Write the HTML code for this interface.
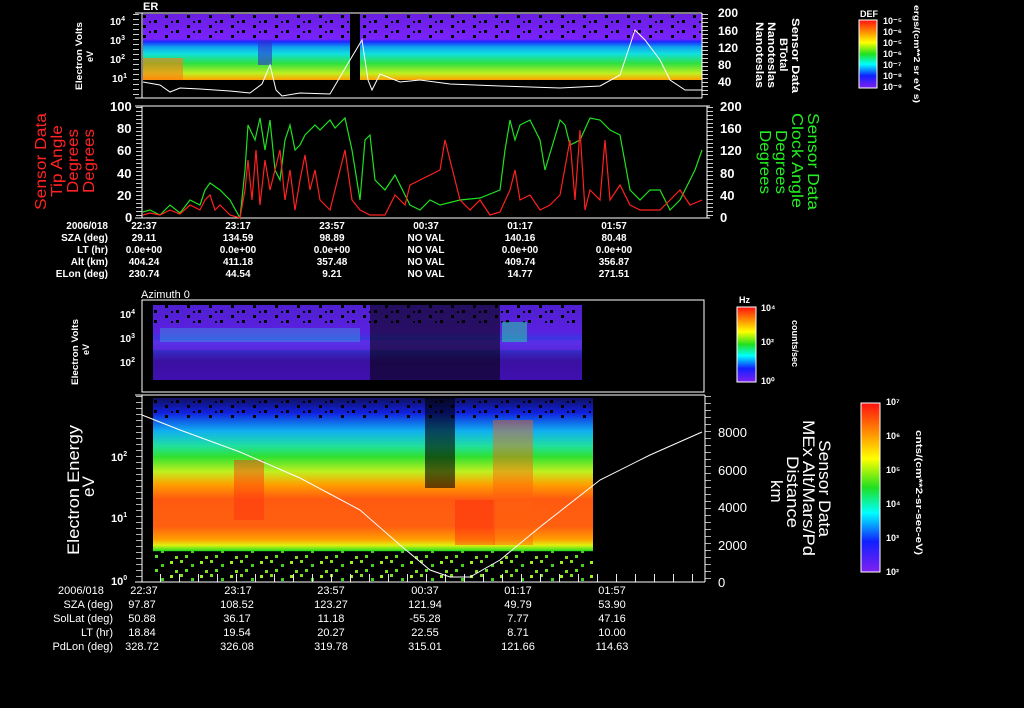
<!DOCTYPE html>
<html><head><meta charset="utf-8"><style>
html,body{margin:0;padding:0;background:#000;width:1024px;height:708px;overflow:hidden}
svg{display:block;font-size:11px}
text{font-family:"Liberation Sans",sans-serif;fill:#fff}
.s{font-weight:bold}
</style></head><body>
<svg width="1024" height="708" viewBox="0 0 1024 708" xmlns="http://www.w3.org/2000/svg">
<defs>
<linearGradient id="sp1" x1="0" y1="0" x2="0" y2="1">
<stop offset="0" stop-color="#6a1fe0"/><stop offset="0.38" stop-color="#7a22ff"/><stop offset="0.42" stop-color="#1a2aff"/><stop offset="0.5" stop-color="#10a0f0"/><stop offset="0.6" stop-color="#10e0e0"/><stop offset="0.75" stop-color="#30e040"/><stop offset="0.9" stop-color="#c0f020"/><stop offset="1" stop-color="#ffa000"/></linearGradient>
<linearGradient id="sp4" x1="0" y1="0" x2="0" y2="1">
<stop offset="0" stop-color="#101060"/><stop offset="0.08" stop-color="#1020e0"/><stop offset="0.18" stop-color="#10b0f0"/><stop offset="0.26" stop-color="#20e0a0"/><stop offset="0.32" stop-color="#30e030"/><stop offset="0.4" stop-color="#c0f020"/><stop offset="0.47" stop-color="#ffa000"/><stop offset="0.55" stop-color="#ff5a10"/><stop offset="0.7" stop-color="#ff6010"/><stop offset="0.77" stop-color="#ffa000"/><stop offset="0.8" stop-color="#e0f010"/><stop offset="0.83" stop-color="#30e020"/><stop offset="0.835" stop-color="#000"/><stop offset="1" stop-color="#000"/></linearGradient>
<linearGradient id="sp3" x1="0" y1="0" x2="0" y2="1">
<stop offset="0" stop-color="#5020d0"/><stop offset="0.35" stop-color="#5a20e0"/><stop offset="0.5" stop-color="#3040e0"/><stop offset="0.75" stop-color="#3a10a0"/><stop offset="1" stop-color="#4010b0"/></linearGradient>
<linearGradient id="cb" x1="0" y1="0" x2="0" y2="1">
<stop offset="0" stop-color="#ff1010"/><stop offset="0.2" stop-color="#ffa000"/><stop offset="0.33" stop-color="#ffff00"/><stop offset="0.5" stop-color="#20e020"/><stop offset="0.65" stop-color="#00ffff"/><stop offset="0.82" stop-color="#1020ff"/><stop offset="1" stop-color="#8020f0"/></linearGradient>
<pattern id="dots" width="30" height="14" patternUnits="userSpaceOnUse">
<rect x="0" y="0" width="3" height="3" fill="#80e020"/><rect x="11" y="4" width="3" height="3" fill="#40d020"/><rect x="20" y="1" width="3" height="3" fill="#a0f020"/><rect x="5" y="9" width="3" height="3" fill="#60e020"/><rect x="25" y="10" width="3" height="3" fill="#80e020"/></pattern>
<pattern id="spk" width="22" height="10" patternUnits="userSpaceOnUse">
<rect x="0" y="0" width="3" height="3" fill="#000"/><rect x="11" y="5" width="3" height="3" fill="#000"/><rect x="17" y="1" width="2" height="2" fill="#000"/></pattern>
</defs>

<!-- Panel 1 -->
<rect x="143" y="14" width="207" height="66" fill="url(#sp1)"/>
<rect x="360" y="14" width="342" height="66" fill="url(#sp1)"/>
<rect x="143" y="14" width="207" height="26" fill="url(#spk)"/>
<rect x="360" y="14" width="342" height="26" fill="url(#spk)"/>
<rect x="143" y="58" width="40" height="22" fill="#ff7a10" opacity="0.6"/>
<rect x="258" y="40" width="14" height="25" fill="#3030d0" opacity="0.6"/>
<polyline points="143,82 160,85 170,92 180,88 200,89 230,91 250,93 262,84 270,65 276,90 282,96 300,93 330,94 350,60 362,40 368,80 372,90 380,74 400,82 420,80 450,84 500,86 560,88 600,86 620,75 635,30 645,40 660,60 670,80 685,90 702,90" fill="none" stroke="#fff" stroke-width="1"/>
<g stroke="#fff" fill="none">
<line x1="135" y1="13" x2="702" y2="13"/><line x1="135" y1="98" x2="702" y2="98"/>
<line x1="142" y1="13" x2="142" y2="98"/><line x1="702" y1="13" x2="702" y2="98"/>
<line x1="136" y1="14" x2="136" y2="98" stroke-width="6" stroke-dasharray="1,4" opacity="0.8"/>
<line x1="705" y1="14" x2="705" y2="98" stroke-width="6" stroke-dasharray="1,3" opacity="0.8"/>
</g>
<text x="143" y="10" class="s">ER</text>
<g class="s" font-size="10">
<text x="110" y="25">10<tspan dy="-4" font-size="7">4</tspan></text>
<text x="110" y="44">10<tspan dy="-4" font-size="7">3</tspan></text>
<text x="110" y="63">10<tspan dy="-4" font-size="7">2</tspan></text>
<text x="112" y="82">10<tspan dy="-4" font-size="7">1</tspan></text>
</g>
<text transform="translate(82,90) rotate(-90)" class="s" font-size="9" textLength="68" lengthAdjust="spacingAndGlyphs">Electron Volts</text>
<text transform="translate(93,62) rotate(-90)" class="s" font-size="9">eV</text>
<g class="s" font-size="12"><text x="718" y="17">200</text><text x="718" y="35">160</text><text x="718" y="52">120</text><text x="718" y="69">80</text><text x="718" y="86">40</text></g>
<text transform="translate(792,18) rotate(90)" class="s" font-size="11" textLength="75" lengthAdjust="spacingAndGlyphs">Sensor Data</text>
<text transform="translate(780,38) rotate(90)" class="s" font-size="11">BTotal</text>
<text transform="translate(768,22) rotate(90)" class="s" font-size="11" textLength="66" lengthAdjust="spacingAndGlyphs">Nanoteslas</text>
<text transform="translate(756,22) rotate(90)" class="s" font-size="11" textLength="66" lengthAdjust="spacingAndGlyphs">Nanoteslas</text>
<text x="860" y="17" class="s" font-size="9">DEF</text>
<rect x="859" y="20" width="18" height="68" fill="url(#cb)" stroke="#fff"/>
<g font-size="9" class="s"><text x="883" y="24">10⁻⁵</text><text x="883" y="35">10⁻⁶</text><text x="883" y="46">10⁻⁵</text><text x="883" y="57">10⁻⁶</text><text x="883" y="68">10⁻⁷</text><text x="883" y="79">10⁻⁸</text><text x="883" y="90">10⁻⁹</text></g>
<text transform="translate(914,5) rotate(90)" class="s" font-size="8" textLength="98" lengthAdjust="spacingAndGlyphs">ergs/(cm**2 sr eV s)</text>

<!-- Panel 2 -->
<g stroke="#fff" fill="none">
<line x1="135" y1="106" x2="710" y2="106"/><line x1="135" y1="218" x2="710" y2="218"/>
<line x1="142" y1="106" x2="142" y2="218"/><line x1="707" y1="106" x2="707" y2="218"/>
<line x1="139" y1="107" x2="139" y2="218" stroke-width="6" stroke-dasharray="1,3" opacity="0.8"/>
<line x1="710" y1="107" x2="710" y2="218" stroke-width="6" stroke-dasharray="1,3" opacity="0.8"/>
</g>
<polyline points="143,212 150,210 160,215 170,205 180,213 190,200 200,205 205,190 210,183 220,190 230,200 240,218 245,170 248,125 255,140 260,118 265,150 270,120 275,170 280,180 285,140 290,125 295,150 300,145 305,135 315,125 320,130 330,120 335,128 345,118 352,150 360,200 365,140 370,135 375,180 385,190 395,175 400,185 410,205 420,210 430,200 440,205 460,200 480,198 500,190 505,150 510,120 515,140 520,125 530,120 540,140 545,170 560,120 565,125 570,145 580,140 590,118 600,120 610,130 620,135 630,190 640,200 650,190 660,190 670,210 680,200 690,180 695,170 702,150" fill="none" stroke="#20e020" stroke-width="1.2"/>
<polyline points="143,215 150,213 160,215 170,210 180,214 190,205 200,210 205,200 210,195 215,210 220,205 230,215 240,218 245,190 248,160 252,200 256,150 260,205 265,160 270,190 280,150 285,200 290,170 295,210 300,180 305,155 310,190 315,170 320,200 330,210 345,150 352,200 360,210 370,215 385,215 395,195 405,205 410,185 420,180 430,175 440,170 445,140 450,160 460,200 470,210 480,200 490,215 500,212 510,190 515,170 520,200 530,195 540,210 550,205 560,195 570,140 575,200 580,130 585,210 590,190 600,200 605,140 610,200 620,185 630,205 640,210 660,210 670,200 680,190 690,205 702,200" fill="none" stroke="#ff2020" stroke-width="1.2"/>
<g font-size="13" class="s"><text x="110" y="111">100</text><text x="117" y="133">80</text><text x="117" y="155">60</text><text x="117" y="178">40</text><text x="117" y="200">20</text><text x="125" y="222">0</text>
<text x="720" y="111">200</text><text x="720" y="133">160</text><text x="720" y="155">120</text><text x="720" y="178">80</text><text x="720" y="200">40</text><text x="720" y="222">0</text></g>
<g font-size="16"><text transform="translate(46,210) rotate(-90)" style="fill:#f22" textLength="97" lengthAdjust="spacingAndGlyphs">Sensor Data</text><text transform="translate(62,197) rotate(-90)" style="fill:#f22" textLength="72" lengthAdjust="spacingAndGlyphs">Tip Angle</text><text transform="translate(78,193) rotate(-90)" style="fill:#f22" textLength="64" lengthAdjust="spacingAndGlyphs">Degrees</text><text transform="translate(94,193) rotate(-90)" style="fill:#f22" textLength="64" lengthAdjust="spacingAndGlyphs">Degrees</text></g>
<g font-size="16"><text transform="translate(808,113) rotate(90)" style="fill:#2e2" textLength="97" lengthAdjust="spacingAndGlyphs">Sensor Data</text><text transform="translate(792,113) rotate(90)" style="fill:#2e2" textLength="95" lengthAdjust="spacingAndGlyphs">Clock Angle</text><text transform="translate(776,130) rotate(90)" style="fill:#2e2" textLength="64" lengthAdjust="spacingAndGlyphs">Degrees</text><text transform="translate(760,130) rotate(90)" style="fill:#2e2" textLength="64" lengthAdjust="spacingAndGlyphs">Degrees</text></g>

<g class="s" font-size="10" text-anchor="middle">
<text x="108" y="229" text-anchor="end">2006/018</text><text x="144" y="229">22:37</text><text x="238" y="229">23:17</text><text x="332" y="229">23:57</text><text x="426" y="229">00:37</text><text x="520" y="229">01:17</text><text x="614" y="229">01:57</text>
<text x="108" y="241" text-anchor="end">SZA (deg)</text><text x="144" y="241">29.11</text><text x="238" y="241">134.59</text><text x="332" y="241">98.89</text><text x="426" y="241">NO VAL</text><text x="520" y="241">140.16</text><text x="614" y="241">80.48</text>
<text x="108" y="253" text-anchor="end">LT (hr)</text><text x="144" y="253">0.0e+00</text><text x="238" y="253">0.0e+00</text><text x="332" y="253">0.0e+00</text><text x="426" y="253">NO VAL</text><text x="520" y="253">0.0e+00</text><text x="614" y="253">0.0e+00</text>
<text x="108" y="265" text-anchor="end">Alt (km)</text><text x="144" y="265">404.24</text><text x="238" y="265">411.18</text><text x="332" y="265">357.48</text><text x="426" y="265">NO VAL</text><text x="520" y="265">409.74</text><text x="614" y="265">356.87</text>
<text x="108" y="277" text-anchor="end">ELon (deg)</text><text x="144" y="277">230.74</text><text x="238" y="277">44.54</text><text x="332" y="277">9.21</text><text x="426" y="277">NO VAL</text><text x="520" y="277">14.77</text><text x="614" y="277">271.51</text>
</g>

<!-- Panel 3 -->
<text x="141" y="298" font-size="11">Azimuth 0</text>
<rect x="153" y="305" width="429" height="75" fill="url(#sp3)"/>
<rect x="153" y="305" width="429" height="20" fill="url(#spk)"/>
<rect x="153" y="340" width="429" height="10" fill="#8020f0" opacity="0.5"/>
<rect x="160" y="328" width="200" height="14" fill="#30c0e0" opacity="0.35"/>
<rect x="502" y="322" width="25" height="20" fill="#20e0a0" opacity="0.5"/>
<rect x="370" y="305" width="130" height="75" fill="#000" opacity="0.55"/>
<g stroke="#fff" fill="none"><rect x="142" y="300" width="562" height="92"/></g>
<g class="s" font-size="10"><text x="120" y="318">10<tspan dy="-4" font-size="7">4</tspan></text><text x="120" y="342">10<tspan dy="-4" font-size="7">3</tspan></text><text x="120" y="366">10<tspan dy="-4" font-size="7">2</tspan></text></g>
<text transform="translate(78,385) rotate(-90)" class="s" font-size="9" textLength="66" lengthAdjust="spacingAndGlyphs">Electron Volts</text>
<text transform="translate(89,355) rotate(-90)" class="s" font-size="9">eV</text>
<text x="739" y="303" class="s" font-size="9">Hz</text>
<rect x="737" y="307" width="19" height="75" fill="url(#cb)" stroke="#fff"/>
<g font-size="9" class="s"><text x="761" y="311">10⁴</text><text x="761" y="345">10²</text><text x="761" y="384">10⁰</text></g>
<text transform="translate(792,320) rotate(90)" class="s" font-size="9">counts/sec</text>

<!-- Panel 4 -->
<rect x="153" y="398" width="440" height="184" fill="url(#sp4)"/>
<rect x="153" y="551" width="440" height="31" fill="url(#dots)"/>
<rect x="153" y="398" width="440" height="20" fill="url(#spk)"/>
<rect x="234" y="460" width="30" height="60" fill="#ff3010" opacity="0.45"/>
<rect x="425" y="398" width="30" height="90" fill="#000" opacity="0.6"/>
<rect x="455" y="500" width="40" height="45" fill="#ff2010" opacity="0.4"/>
<rect x="493" y="420" width="40" height="125" fill="#ff6010" opacity="0.45"/>
<polyline points="142,415 180,430 240,452 300,478 360,510 400,545 430,570 450,577 470,577 500,560 540,527 600,480 650,455 702,432" fill="none" stroke="#fff" stroke-width="1"/>
<g stroke="#fff" fill="none"><line x1="135" y1="395" x2="705" y2="395"/><line x1="135" y1="582" x2="705" y2="582"/><line x1="142" y1="395" x2="142" y2="582"/><line x1="705" y1="395" x2="705" y2="582"/>
<line x1="139" y1="396" x2="139" y2="582" stroke-width="6" stroke-dasharray="1,5" opacity="0.7"/>
<line x1="708" y1="396" x2="708" y2="582" stroke-width="6" stroke-dasharray="1,6" opacity="0.7"/>
<line x1="160" y1="578" x2="700" y2="578" stroke-width="8" stroke-dasharray="1,18" opacity="0.9"/>
</g>
<g class="s" font-size="11"><text x="111" y="461">10<tspan dy="-5" font-size="7">2</tspan></text><text x="111" y="522">10<tspan dy="-5" font-size="7">1</tspan></text><text x="111" y="585">10<tspan dy="-5" font-size="7">0</tspan></text></g>
<text transform="translate(79,555) rotate(-90)" font-size="17" textLength="130" lengthAdjust="spacingAndGlyphs">Electron Energy</text>
<text transform="translate(94,497) rotate(-90)" font-size="17">eV</text>
<g font-size="13"><text x="718" y="437">8000</text><text x="718" y="475">6000</text><text x="718" y="512">4000</text><text x="718" y="550">2000</text><text x="718" y="587">0</text></g>
<g font-size="17"><text transform="translate(819,440) rotate(90)" textLength="97" lengthAdjust="spacingAndGlyphs">Sensor Data</text><text transform="translate(803,420) rotate(90)" textLength="136" lengthAdjust="spacingAndGlyphs">MEx Alt/Mars/Pd</text><text transform="translate(787,456) rotate(90)" textLength="72" lengthAdjust="spacingAndGlyphs">Distance</text><text transform="translate(771,480) rotate(90)">km</text></g>
<rect x="861" y="403" width="19" height="169" fill="url(#cb)" stroke="#fff"/>
<g font-size="9" class="s"><text x="886" y="405">10⁷</text><text x="886" y="439">10⁶</text><text x="886" y="473">10⁵</text><text x="886" y="507">10⁴</text><text x="886" y="541">10³</text><text x="886" y="575">10²</text></g>
<text transform="translate(916,430) rotate(90)" class="s" font-size="9" textLength="125" lengthAdjust="spacingAndGlyphs">cnts/(cm**2-sr-sec-eV)</text>

<g font-size="11" text-anchor="middle">
<text x="58" y="594" text-anchor="start">2006/018</text><text x="144" y="594">22:37</text><text x="238" y="594">23:17</text><text x="331" y="594">23:57</text><text x="425" y="594">00:37</text><text x="518" y="594">01:17</text><text x="612" y="594">01:57</text>
<text x="113" y="608" text-anchor="end">SZA (deg)</text><text x="142" y="608">97.87</text><text x="237" y="608">108.52</text><text x="331" y="608">123.27</text><text x="425" y="608">121.94</text><text x="518" y="608">49.79</text><text x="612" y="608">53.90</text>
<text x="113" y="622" text-anchor="end">SolLat (deg)</text><text x="142" y="622">50.88</text><text x="237" y="622">36.17</text><text x="331" y="622">11.18</text><text x="425" y="622">-55.28</text><text x="518" y="622">7.77</text><text x="612" y="622">47.16</text>
<text x="113" y="636" text-anchor="end">LT (hr)</text><text x="142" y="636">18.84</text><text x="237" y="636">19.54</text><text x="331" y="636">20.27</text><text x="425" y="636">22.55</text><text x="518" y="636">8.71</text><text x="612" y="636">10.00</text>
<text x="113" y="650" text-anchor="end">PdLon (deg)</text><text x="142" y="650">328.72</text><text x="237" y="650">326.08</text><text x="331" y="650">319.78</text><text x="425" y="650">315.01</text><text x="518" y="650">121.66</text><text x="612" y="650">114.63</text>
</g>
</svg>
</body></html>
